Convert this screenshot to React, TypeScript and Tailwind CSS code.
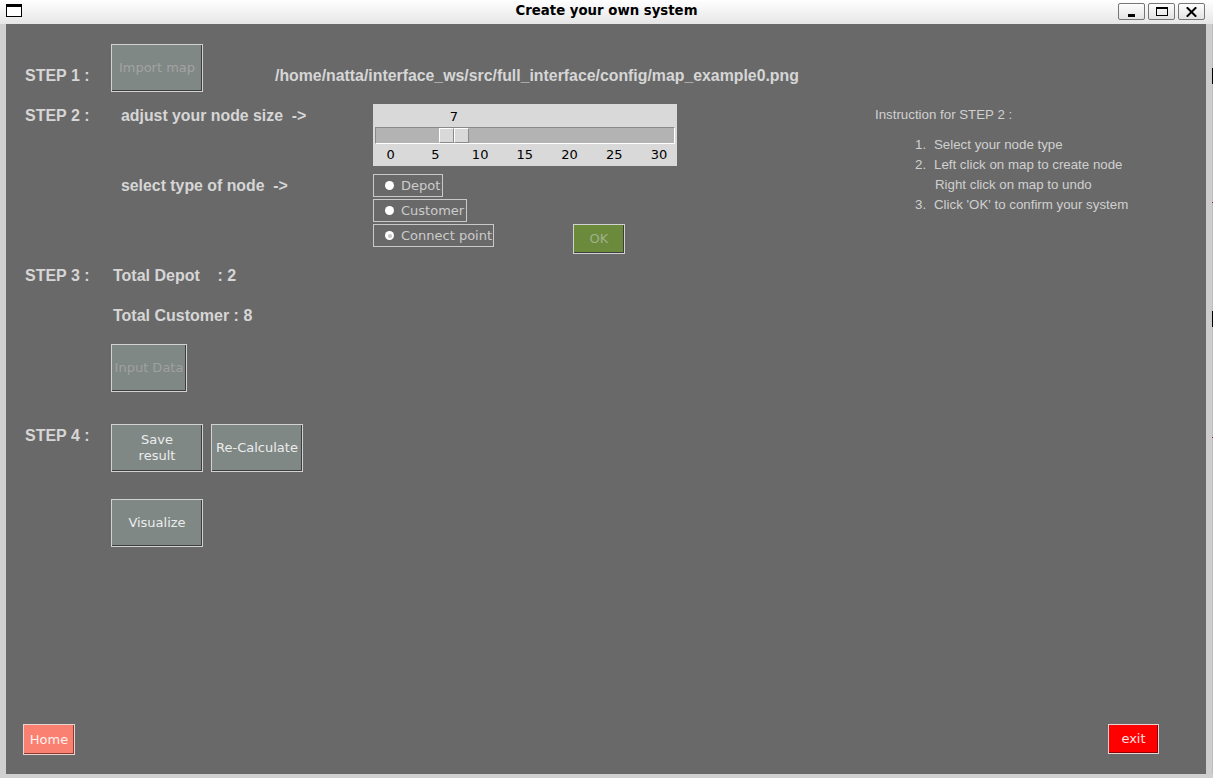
import React from "react";

const btnBase =
  "flex items-center justify-center text-center border border-[#d2d2d2] shadow-[inset_-1px_-1px_0_#3e3e3e] font-['DejaVu_Sans',sans-serif] text-[13px] leading-[16px]";

function WinButton({ children }: { children: React.ReactNode }) {
  return (
    <div className="w-[27px] h-[17px] border border-[#767676] rounded-[2px] bg-gradient-to-b from-[#fdfdfd] to-[#e3e3e3] flex items-center justify-center">
      {children}
    </div>
  );
}

function Radio({ label, w, selected }: { label: string; w: string; selected?: boolean }) {
  return (
    <div className={`${w} h-[23px] border border-[#c9c9c9] flex items-center pl-[11px]`}>
      <div className="w-[9px] h-[9px] rounded-full bg-white flex items-center justify-center">
        {selected ? <div className="w-[4px] h-[4px] rounded-full bg-[#c4c4c4]" /> : null}
      </div>
      <span className="ml-[7px] font-['DejaVu_Sans',sans-serif] text-[13px] leading-[15px] text-[#cccccc] whitespace-nowrap">
        {label}
      </span>
    </div>
  );
}

function Slider() {
  const ticks = [0, 5, 10, 15, 20, 25, 30];
  return (
    <div className="w-[304px] h-[62px] bg-[#d9d9d9] flex flex-col pt-[4.5px] font-['DejaVu_Sans',sans-serif] text-[13px] leading-[15px] text-black">
      <div className="h-[15px] flex">
        <span className="w-[85px] text-right">7</span>
      </div>
      <div className="mx-[2px] mt-[3.5px] h-[17px] bg-[#b3b3b3] border border-t-[#8a8a8a] border-l-[#8a8a8a] border-b-white border-r-white relative">
        <div className="absolute left-[63px] top-0 w-[30px] h-[15px] flex">
          <div className="w-[15px] h-[15px] bg-[#d9d9d9] border-t border-l border-t-white border-l-white border-b border-b-[#8a8a8a] border-r border-r-[#8a8a8a]" />
          <div className="w-[15px] h-[15px] bg-[#d9d9d9] border-t border-l border-t-white border-l-white border-b border-b-[#8a8a8a] border-r border-r-[#8a8a8a]" />
        </div>
      </div>
      <div className="mt-[2.5px] h-[15px] flex -ml-[4.66px]">
        {ticks.map((t) => (
          <span key={t} className="w-[44.72px] shrink-0 text-center">
            {t}
          </span>
        ))}
      </div>
    </div>
  );
}

export default function App() {
  return (
    <div className="w-[1213px] h-[778px] bg-[#d0d0d0] flex flex-col overflow-hidden font-['Liberation_Sans',Arial,sans-serif]">
      {/* Title bar */}
      <div className="h-[24px] shrink-0 grid grid-cols-[1fr_auto_1fr] bg-gradient-to-b from-[#ffffff] to-[#e6e6e6]">
        <div className="flex items-start">
          <div className="ml-[6px] mt-[4px] w-[16px] h-[13px] border border-black border-t-[3px] bg-white" />
        </div>
        <div className="pt-[3px] leading-[15px] font-['DejaVu_Sans',sans-serif] font-bold text-[13.3px] text-black whitespace-nowrap">
          Create your own system
        </div>
        <div className="flex justify-end items-start pt-[3px] pr-[8px] gap-[3px]">
          <WinButton>
            <div className="w-[7px] h-[3px] bg-black mt-[7px]" />
          </WinButton>
          <WinButton>
            <div className="w-[12px] h-[9px] border border-black border-t-[2px]" />
          </WinButton>
          <WinButton>
            <svg width="11" height="10" viewBox="0 0 11 10">
              <path d="M1.5 1 L9.5 9 M9.5 1 L1.5 9" stroke="black" strokeWidth="2" strokeLinecap="square" />
            </svg>
          </WinButton>
        </div>
      </div>

      {/* Body */}
      <div className="flex h-[750px] shrink-0">
        <div className="w-[6px] bg-[#d0d0d0]" />
        <div className="w-[1200px] bg-[#696969] flex flex-col text-[#d6d6d6]">
          {/* STEP 1 */}
          <div className="flex items-start mt-[20px] pl-[19px] h-[48px]">
            <div className="w-[86px] pt-[21.5px] leading-[20px] text-[16px] font-bold">STEP 1 :</div>
            <div className={`${btnBase} w-[92px] h-[48px] bg-[#7f8885] text-[#a3a3a3]`}>Import map</div>
            <div className="ml-[72px] pt-[21.5px] leading-[20px] text-[15.85px] font-bold whitespace-nowrap">
              /home/natta/interface_ws/src/full_interface/config/map_example0.png
            </div>
          </div>

          {/* STEP 2 */}
          <div className="flex items-start mt-[12px] pl-[19px]">
            <div className="w-[86px] pt-[1.5px] leading-[20px] text-[16px] font-bold">STEP 2 :</div>
            <div className="ml-[10px] w-[252px] flex flex-col text-[15.85px] font-bold leading-[20px] whitespace-pre">
              <div className="pt-[1.5px]">adjust your node size  -&gt;</div>
              <div className="mt-[50px]">select type of node  -&gt;</div>
            </div>
            <div className="w-[304px] flex flex-col">
              <Slider />
              <div className="flex items-start mt-[8px]">
                <div className="w-[121px] flex flex-col items-start gap-[2px]">
                  <Radio label="Depot" w="w-[70px]" />
                  <Radio label="Customer" w="w-[94px]" />
                  <Radio label="Connect point" w="w-[121px]" selected />
                </div>
                <div className={`${btnBase} ml-[79px] mt-[50px] w-[52px] h-[30px] bg-[#6b8a3b] text-[#9fb28a]`}>OK</div>
              </div>
            </div>
            <div className="ml-[198px] pt-[1px] flex flex-col text-[13.3px] leading-[20px] text-[#d0d0d0] whitespace-nowrap">
              <div>Instruction for STEP 2 :</div>
              <div className="mt-[10px] flex flex-col pl-[40px]">
                <div className="flex">
                  <span className="w-[19px]">1.</span>
                  <span>Select your node type</span>
                </div>
                <div className="flex">
                  <span className="w-[19px]">2.</span>
                  <div className="flex flex-col">
                    <span>Left click on map to create node</span>
                    <span className="pl-[1px]">Right click on map to undo</span>
                  </div>
                </div>
                <div className="flex">
                  <span className="w-[19px]">3.</span>
                  <span>Click 'OK' to confirm your system</span>
                </div>
              </div>
            </div>
          </div>

          {/* STEP 3 */}
          <div className="flex items-start mt-[11.5px] pl-[19px] text-[16px] font-bold leading-[20px]">
            <div className="w-[86px]">STEP 3 :</div>
            <div className="flex flex-col items-start">
              <div className="pl-[2px] whitespace-pre">Total Depot    : 2</div>
              <div className="pl-[2px] mt-[20px] whitespace-pre">Total Customer : 8</div>
              <div className={`${btnBase} font-normal mt-[18.5px] w-[76px] h-[48px] bg-[#7f8885] text-[#a0a0a0]`}>Input Data</div>
            </div>
          </div>

          {/* STEP 4 */}
          <div className="flex items-start mt-[32px] pl-[19px]">
            <div className="w-[86px] pt-[1.5px] leading-[20px] text-[16px] font-bold">STEP 4 :</div>
            <div className="flex flex-col items-start">
              <div className="flex gap-[8px]">
                <div className={`${btnBase} w-[92px] h-[48px] bg-[#7f8885] text-[#ececec]`}>
                  Save
                  <br />
                  result
                </div>
                <div className={`${btnBase} w-[92px] h-[48px] bg-[#7f8885] text-[#ececec]`}>Re-Calculate</div>
              </div>
              <div className={`${btnBase} mt-[27px] w-[92px] h-[48px] bg-[#7f8885] text-[#ececec]`}>Visualize</div>
            </div>
          </div>

          {/* Bottom buttons */}
          <div className="mt-auto flex justify-between items-start pb-[19px] pl-[17px] pr-[47px]">
            <div className={`${btnBase} w-[52px] h-[31px] bg-[#fa8072] text-[#fff1ee] border-[#e8d4d0] shadow-[inset_-1px_-1px_0_#8b3b30]`}>Home</div>
            <div className={`${btnBase} w-[51px] h-[30px] bg-[#ff0000] text-[#ffe0e0] border-[#e4d4d4] shadow-[inset_-1px_-1px_0_#8b0000]`}>exit</div>
          </div>
        </div>
        <div className="w-[7px] relative bg-[#cdcdcd] border-r border-r-[#bdbdbd]">
          <div className="absolute right-[-1px] top-[44px] w-[1px] h-[16px] bg-black" />
          <div className="absolute right-[-1px] top-[178px] w-[1px] h-[1px] bg-[#a02020]" />
          <div className="absolute right-[-1px] top-[287px] w-[1px] h-[16px] bg-black" />
          <div className="absolute right-[-1px] top-[413px] w-[1px] h-[1px] bg-[#a02020]" />
        </div>
      </div>
      <div className="flex-1 bg-[#d0d0d0]" />
    </div>
  );
}
